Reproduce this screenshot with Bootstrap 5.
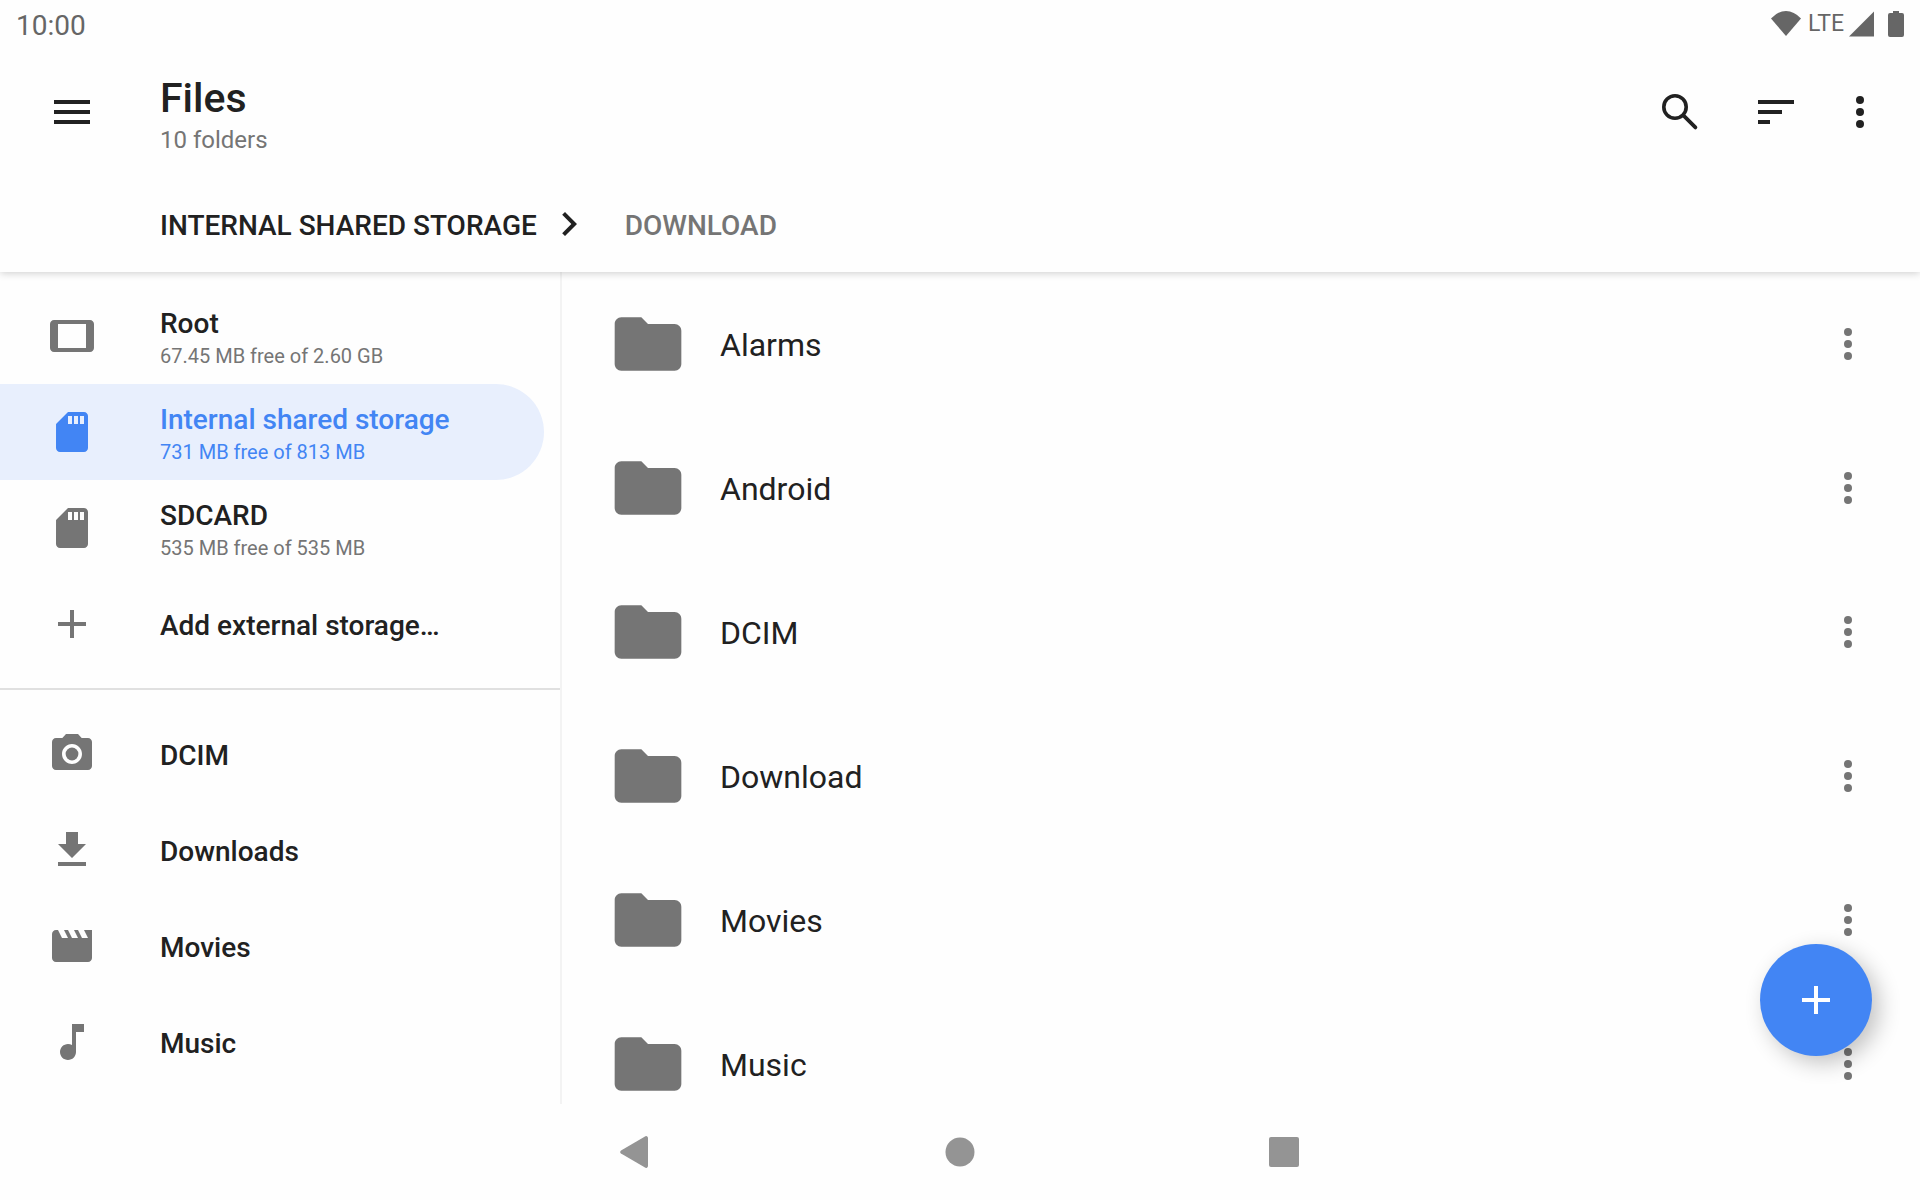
<!DOCTYPE html>
<html lang="en">
<head>
<meta charset="utf-8">
<meta name="viewport" content="width=device-width, initial-scale=1">
<title>Files</title>
<link href="https://cdn.jsdelivr.net/npm/bootstrap@5.3.0/dist/css/bootstrap.min.css" rel="stylesheet">
<style>
  :root { --ink: #212121; --muted: #757575; --accent: #4285f4; --status: #666; --navkey: #949494; }
  body { font-family: Roboto, "Liberation Sans", sans-serif; color: var(--ink); background: #fefefe; }
  svg { display: block; fill: currentColor; flex: none; }
  a { color: inherit; text-decoration: none; }
  .ico { width: 48px; height: 48px; }
  .plain-btn { background: none; border: 0; padding: 0; color: inherit; }
  .status-bar { height: 48px; padding: 0 14px 0 16px; color: var(--status); font-size: 28px; line-height: 48px; }
  .status-time { padding-top: 3px; }
  .status-net { font-size: 23px; margin: 0 4px 0 6px; }
  .status-battery { margin-left: 10px; }
  .app-head { background: #fefefe; box-shadow: 0 1px 8px rgba(0,0,0,.2); z-index: 2; }
  .tool-bar { height: 128px; padding: 0 36px 0 48px; }
  .head-title { font-size: 41px; line-height: 48px; font-weight: 500; margin: 0 0 2px; }
  .head-sub { font-size: 24px; line-height: 32px; color: var(--muted); }
  .head-text { margin-left: 64px; padding-top: 6px; }
  .tool-pair { gap: 48px; margin-right: 36px; }
  .crumbs { height: 96px; padding-left: 160px; font-size: 28px; line-height: 40px; font-weight: 500; }
  .crumbs a { padding-top: 4px; }
  .crumb-next { margin-left: 32px; color: var(--muted); }
  .side { width: 562px; border-right: 2px solid #f3f3f3; }
  .side-group { padding: 16px 16px 16px 0; margin: 0; }
  .side-group + .side-group { padding-bottom: 0; }
  .side-rule { height: 2px; background: #e0e0e0; }
  .side-item { height: 96px; padding-left: 48px; gap: 64px; border-radius: 0 48px 48px 0; }
  .side-item svg { color: var(--muted); }
  .side-text { padding-top: 4px; }
  .side-name { font-size: 28px; line-height: 36px; font-weight: 500; }
  .side-info { font-size: 20px; line-height: 28px; color: var(--muted); }
  .side-item.active { background: #e8effd; }
  .side-item.active, .side-item.active svg, .side-item.active .side-info { color: var(--accent); }
  .file-row { height: 144px; padding: 0 48px 0 46px; }
  .file-name { font-size: 32px; line-height: 40px; margin-left: 32px; padding-top: 2px; }
  .file-row svg { color: var(--muted); }
  .folder { width: 80px; height: 80px; }
  .fab { position: absolute; right: 48px; bottom: 48px; width: 112px; height: 112px; border-radius: 50%; background: var(--accent); color: #fff; box-shadow: 7px 7px 22px rgba(0,0,0,.24); }
  .keys { height: 96px; color: var(--navkey); gap: 276px; }
</style>
</head>
<body class="vh-100 overflow-hidden d-flex flex-column">
<header class="app-head position-relative flex-shrink-0">
  <div class="status-bar d-flex align-items-center justify-content-between">
    <span class="status-time">10:00</span>
    <div class="d-flex align-items-center">
      <svg width="32" height="32" viewBox="0 0 32 32"><path d="M1 10.500Q8 3 16 3t15 7.500L16 28z"/></svg>
      <span class="status-net">LTE</span>
      <svg width="28" height="32" viewBox="0 0 28 32"><path d="M1 28.500L26 3.500v25z"/></svg>
      <svg class="status-battery" width="20" height="32" viewBox="0 0 20 32"><path d="M7 3h6v2h3a2 2 0 0 1 2 2v20a2 2 0 0 1-2 2H4a2 2 0 0 1-2-2V7a2 2 0 0 1 2-2h3z"/></svg>
    </div>
  </div>
  <div class="tool-bar d-flex align-items-center">
    <button class="plain-btn" type="button" aria-label="Menu"><svg class="ico" viewBox="0 0 24 24"><path d="M3 18h18v-2H3v2zm0-5h18v-2H3v2zm0-7v2h18V6H3z"/></svg></button>
    <div class="head-text flex-grow-1">
      <h1 class="head-title">Files</h1>
      <div class="head-sub">10 folders</div>
    </div>
    <div class="tool-pair d-flex">
      <button class="plain-btn" type="button" aria-label="Search"><svg class="ico" viewBox="0 0 24 24"><circle cx="9.500" cy="9.500" r="5.600" fill="none" stroke="currentColor" stroke-width="1.800"/><path d="M14.200 14.200l5.500 5.500" stroke="currentColor" stroke-width="1.900" stroke-linecap="round"/></svg></button>
      <button class="plain-btn" type="button" aria-label="Sort"><svg class="ico" viewBox="0 0 24 24"><path d="M3 18h6v-2H3v2zM3 6v2h18V6H3zm0 7h12v-2H3v2z"/></svg></button>
    </div>
    <button class="plain-btn" type="button" aria-label="More options"><svg class="ico" viewBox="0 0 24 24"><use href="#dots"/></svg></button>
  </div>
  <nav class="crumbs d-flex align-items-center" aria-label="Path">
    <a href="#">INTERNAL SHARED STORAGE</a>
    <svg class="ms-2 ico" viewBox="0 0 24 24"><path d="M10 6L8.590 7.410 13.170 12l-4.580 4.590L10 18l6-6z"/></svg>
    <a class="crumb-next" href="#">DOWNLOAD</a>
  </nav>
</header>
<svg class="d-none"><defs>
  <g id="dots"><circle cx="12" cy="6" r="2"/><circle cx="12" cy="12" r="2"/><circle cx="12" cy="18" r="2"/></g>
  <path id="folder" d="M10 4H4c-1.100 0-1.990.9-1.990 2L2 18c0 1.100.9 2 2 2h16c1.100 0 2-.9 2-2V8c0-1.100-.9-2-2-2h-8l-2-2z"/>
  <path id="sd" d="M18 2h-8L4.020 8 4 20c0 1.100.9 2 2 2h12c1.100 0 2-.9 2-2V4c0-1.100-.9-2-2-2zm-6 6h-2V4h2v4zm3 0h-2V4h2v4zm3 0h-2V4h2v4z"/>
</defs></svg>
<main class="d-flex flex-grow-1 position-relative overflow-hidden">
  <nav class="side flex-shrink-0 overflow-hidden" aria-label="Storage">
    <div class="side-group">
      <a class="side-item d-flex align-items-center" href="#"><svg class="ico" viewBox="0 0 24 24"><path d="M21 4H3c-1.100 0-2 .9-2 2v12c0 1.100.9 2 2 2h18c1.100 0 1.990-.9 1.990-2L23 6c0-1.100-.9-2-2-2zm-2 14H5V6h14v12z"/></svg><div class="side-text"><div class="side-name">Root</div><div class="side-info">67.45 MB free of 2.60 GB</div></div></a>
      <a class="side-item active d-flex align-items-center" href="#"><svg class="ico" viewBox="0 0 24 24"><use href="#sd"/></svg><div class="side-text"><div class="side-name">Internal shared storage</div><div class="side-info">731 MB free of 813 MB</div></div></a>
      <a class="side-item d-flex align-items-center" href="#"><svg class="ico" viewBox="0 0 24 24"><use href="#sd"/></svg><div class="side-text"><div class="side-name">SDCARD</div><div class="side-info">535 MB free of 535 MB</div></div></a>
      <a class="side-item d-flex align-items-center" href="#"><svg class="ico" viewBox="0 0 24 24"><path d="M19 13h-6v6h-2v-6H5v-2h6V5h2v6h6v2z"/></svg><div class="side-text side-name">Add external storage…</div></a>
    </div>
    <div class="side-rule"></div>
    <div class="side-group">
      <a class="side-item d-flex align-items-center" href="#"><svg class="ico" viewBox="0 0 24 24"><circle cx="12" cy="12" r="3.200"/><path d="M9 2L7.170 4H4c-1.100 0-2 .9-2 2v12c0 1.100.9 2 2 2h16c1.100 0 2-.9 2-2V6c0-1.100-.9-2-2-2h-3.170L15 2H9zm3 15c-2.760 0-5-2.240-5-5s2.240-5 5-5 5 2.240 5 5-2.240 5-5 5z"/></svg><div class="side-text side-name">DCIM</div></a>
      <a class="side-item d-flex align-items-center" href="#"><svg class="ico" viewBox="0 0 24 24"><path d="M19 9h-4V3H9v6H5l7 7 7-7zM5 18v2h14v-2H5z"/></svg><div class="side-text side-name">Downloads</div></a>
      <a class="side-item d-flex align-items-center" href="#"><svg class="ico" viewBox="0 0 24 24"><path d="M18 4l2 4h-3l-2-4h-2l2 4h-3l-2-4H8l2 4H7L5 4H4c-1.100 0-1.990.9-1.990 2L2 18c0 1.100.9 2 2 2h16c1.100 0 2-.9 2-2V4h-4z"/></svg><div class="side-text side-name">Movies</div></a>
      <a class="side-item d-flex align-items-center" href="#"><svg class="ico" viewBox="0 0 24 24"><path d="M12 3v10.550c-.59-.34-1.270-.55-2-.55-2.210 0-4 1.790-4 4s1.790 4 4 4 4-1.790 4-4V7h4V3h-6z"/></svg><div class="side-text side-name">Music</div></a>
    </div>
  </nav>
  <div class="flex-grow-1 overflow-hidden">
    <div class="file-row d-flex align-items-center"><svg class="folder" viewBox="0 0 24 24"><use href="#folder"/></svg><span class="file-name flex-grow-1">Alarms</span><button class="plain-btn" type="button" aria-label="Alarms options"><svg class="ico" viewBox="0 0 24 24"><use href="#dots"/></svg></button></div>
    <div class="file-row d-flex align-items-center"><svg class="folder" viewBox="0 0 24 24"><use href="#folder"/></svg><span class="file-name flex-grow-1">Android</span><button class="plain-btn" type="button" aria-label="Android options"><svg class="ico" viewBox="0 0 24 24"><use href="#dots"/></svg></button></div>
    <div class="file-row d-flex align-items-center"><svg class="folder" viewBox="0 0 24 24"><use href="#folder"/></svg><span class="file-name flex-grow-1">DCIM</span><button class="plain-btn" type="button" aria-label="DCIM options"><svg class="ico" viewBox="0 0 24 24"><use href="#dots"/></svg></button></div>
    <div class="file-row d-flex align-items-center"><svg class="folder" viewBox="0 0 24 24"><use href="#folder"/></svg><span class="file-name flex-grow-1">Download</span><button class="plain-btn" type="button" aria-label="Download options"><svg class="ico" viewBox="0 0 24 24"><use href="#dots"/></svg></button></div>
    <div class="file-row d-flex align-items-center"><svg class="folder" viewBox="0 0 24 24"><use href="#folder"/></svg><span class="file-name flex-grow-1">Movies</span><button class="plain-btn" type="button" aria-label="Movies options"><svg class="ico" viewBox="0 0 24 24"><use href="#dots"/></svg></button></div>
    <div class="file-row d-flex align-items-center"><svg class="folder" viewBox="0 0 24 24"><use href="#folder"/></svg><span class="file-name flex-grow-1">Music</span><button class="plain-btn" type="button" aria-label="Music options"><svg class="ico" viewBox="0 0 24 24"><use href="#dots"/></svg></button></div>
  </div>
  <button class="fab plain-btn d-flex align-items-center justify-content-center" type="button" aria-label="Add"><svg class="ico" viewBox="0 0 24 24"><path d="M19 13h-6v6h-2v-6H5v-2h6V5h2v6h6v2z"/></svg></button>
</main>
<footer class="keys flex-shrink-0 d-flex align-items-center justify-content-center">
  <button class="plain-btn" type="button" aria-label="Back"><svg class="ico" viewBox="0 0 48 48"><path d="M36 10v28a2 2 0 0 1-3 1.600L9 25.600a2 2 0 0 1 0-3.200L33 8.400A2 2 0 0 1 36 10z"/></svg></button>
  <button class="plain-btn" type="button" aria-label="Home"><svg class="ico" viewBox="0 0 48 48"><circle cx="24" cy="24" r="14.500"/></svg></button>
  <button class="plain-btn" type="button" aria-label="Recent apps"><svg class="ico" viewBox="0 0 48 48"><rect x="9" y="9" width="30" height="30" rx="2"/></svg></button>
</footer>
<script src="https://cdn.jsdelivr.net/npm/bootstrap@5.3.0/dist/js/bootstrap.bundle.min.js"></script>
</body>
</html>
